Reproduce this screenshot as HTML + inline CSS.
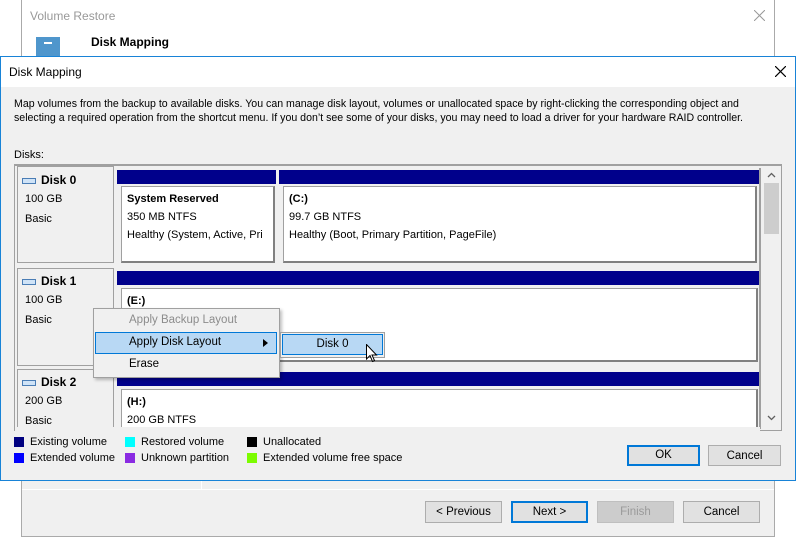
<!DOCTYPE html><html><head><style>
*{margin:0;padding:0;box-sizing:border-box}
body{width:796px;height:537px;overflow:hidden;background:#fff;font-family:"Liberation Sans",sans-serif;font-size:11px;color:#000;position:relative}
.a{position:absolute;white-space:nowrap}
.btn{position:absolute;background:#e1e1e1;border:1px solid #adadad;text-align:center;line-height:20px;font-size:11.5px}
.bar{position:absolute;background:#00008b;height:14px}
.vol{position:absolute;background:#fff;border:1px solid #a0a0a0;border-right:2px solid #808080;border-bottom:2px solid #808080;padding:3px 5px;line-height:18px;white-space:nowrap;overflow:hidden}
.pane{position:absolute;left:17px;width:97px;background:#f0f0f0;border:1px solid #a0a0a0}
.di{display:inline-block;width:14px;height:6px;border:1px solid #4a7db5;background:#cfe3f7;vertical-align:middle;margin-right:5px}
.sq{position:absolute;width:10px;height:10px}
</style></head><body>
<div class="a" style="left:21px;top:0;width:754px;height:537px;border:1px solid #aaa;border-top:none;background:#fff"></div>
<div class="a" style="left:30px;top:9px;color:#999;font-size:12px">Volume Restore</div>
<svg class="a" style="left:754px;top:10px" width="11" height="11"><path d="M0 0L11 11M11 0L0 11" stroke="#999" stroke-width="1"/></svg>
<div class="a" style="left:36px;top:37px;width:24px;height:20px;background:#4f96cc"></div>
<div class="a" style="left:44px;top:42px;width:8px;height:2px;background:#fff"></div>
<div class="a" style="left:91px;top:35px;font-weight:bold;font-size:12px">Disk Mapping</div>
<div class="a" style="left:22px;top:480px;width:752px;height:56px;background:#f0f0f0;border-top:1px solid #ddd"></div>
<div class="a" style="left:22px;top:489px;width:752px;height:1px;background:#fff"></div>
<div class="a" style="left:201px;top:480px;width:1px;height:9px;background:#fff"></div>
<div class="btn" style="left:425px;top:501px;width:77px;height:22px">&lt; Previous</div>
<div class="btn" style="left:511px;top:501px;width:77px;height:22px;border:2px solid #0078d7;line-height:18px">Next &gt;</div>
<div class="btn" style="left:597px;top:501px;width:77px;height:22px;background:#ccc;border-color:#bfbfbf;color:#9a9a9a">Finish</div>
<div class="btn" style="left:683px;top:501px;width:77px;height:22px">Cancel</div>

<div class="a" style="left:0;top:56px;width:796px;height:425px;border:1px solid #1883d7;background:#f0f0f0"></div>
<div class="a" style="left:1px;top:57px;width:794px;height:30px;background:#fff"></div>
<div class="a" style="left:9px;top:65px;font-size:12px">Disk Mapping</div>
<svg class="a" style="left:775px;top:66px" width="11" height="11"><path d="M0 0L11 11M11 0L0 11" stroke="#000" stroke-width="1.2"/></svg>
<div class="a" style="left:14px;top:97px;line-height:14px;font-size:10.6px">Map volumes from the backup to available disks. You can manage disk layout, volumes or unallocated space by right-clicking the corresponding object and<br>selecting a required operation from the shortcut menu. If you don’t see some of your disks, you may need to load a driver for your hardware RAID controller.</div>
<div class="a" style="left:14px;top:149px">Disks:</div>
<div class="a" style="left:14px;top:164px;width:768px;height:267px;border:1px solid #a0a0a0;border-top:2px solid #a0a0a0;background:#f0f0f0;overflow:hidden"></div>
<div class="a" style="left:763px;top:168px;width:17px;height:261px;background:#f0f0f0"></div>
<div class="a" style="left:764px;top:183px;width:15px;height:51px;background:#cdcdcd"></div>
<svg class="a" style="left:767px;top:172px" width="9" height="6"><path d="M1 5L4.5 1.5L8 5" stroke="#606060" fill="none" stroke-width="1.3"/></svg>
<svg class="a" style="left:767px;top:415px" width="9" height="6"><path d="M1 1L4.5 4.5L8 1" stroke="#606060" fill="none" stroke-width="1.3"/></svg>
<div class="a" style="left:759px;top:168px;width:2px;height:261px;background:#a0a0a0"></div>

<div class="pane" style="top:166px;height:97px"></div>
<div class="a" style="left:22px;top:173px;font-weight:bold;font-size:12px"><span class="di"></span>Disk 0</div>
<div class="a" style="left:25px;top:193px">100 GB</div>
<div class="a" style="left:25px;top:213px">Basic</div>
<div class="bar" style="left:117px;top:170px;width:159px"></div>
<div class="bar" style="left:279px;top:170px;width:480px"></div>
<div class="vol" style="left:121px;top:186px;width:154px;height:77px"><b>System Reserved</b><br>350 MB NTFS<br>Healthy (System, Active, Pri</div>
<div class="vol" style="left:283px;top:186px;width:474px;height:77px"><b>(C:)</b><br>99.7 GB NTFS<br>Healthy (Boot, Primary Partition, PageFile)</div>

<div class="pane" style="top:268px;height:98px"></div>
<div class="a" style="left:22px;top:274px;font-weight:bold;font-size:12px"><span class="di"></span>Disk 1</div>
<div class="a" style="left:25px;top:294px">100 GB</div>
<div class="a" style="left:25px;top:314px">Basic</div>
<div class="bar" style="left:117px;top:271px;width:642px"></div>
<div class="vol" style="left:121px;top:288px;width:637px;height:74px"><b>(E:)</b></div>

<div class="pane" style="top:369px;height:62px"></div>
<div class="a" style="left:22px;top:375px;font-weight:bold;font-size:12px"><span class="di"></span>Disk 2</div>
<div class="a" style="left:25px;top:395px">200 GB</div>
<div class="a" style="left:25px;top:415px">Basic</div>
<div class="bar" style="left:117px;top:372px;width:642px"></div>
<div class="vol" style="left:121px;top:389px;width:637px;height:42px;border-bottom:none"><b>(H:)</b><br>200 GB NTFS</div>
<div class="a" style="left:15px;top:427px;width:745px;height:4px;background:#f0f0f0"></div>

<div class="sq" style="left:14px;top:437px;background:#000080"></div><div class="a" style="left:30px;top:436px">Existing volume</div>
<div class="sq" style="left:14px;top:453px;background:#0000ff"></div><div class="a" style="left:30px;top:452px">Extended volume</div>
<div class="sq" style="left:125px;top:437px;background:#00ffff"></div><div class="a" style="left:141px;top:436px">Restored volume</div>
<div class="sq" style="left:125px;top:453px;background:#8a2be2"></div><div class="a" style="left:141px;top:452px">Unknown partition</div>
<div class="sq" style="left:247px;top:437px;background:#000"></div><div class="a" style="left:263px;top:436px">Unallocated</div>
<div class="sq" style="left:247px;top:453px;background:#7cfc00"></div><div class="a" style="left:263px;top:452px">Extended volume free space</div>
<div class="btn" style="left:627px;top:445px;width:73px;height:21px;border:2px solid #0078d7;line-height:17px">OK</div>
<div class="btn" style="left:708px;top:445px;width:73px;height:21px">Cancel</div>

<div class="a" style="left:93px;top:308px;width:187px;height:70px;background:#f0f0f0;border:1px solid #a0a0a0;box-shadow:2px 2px 3px rgba(0,0,0,.25)"></div>
<div class="a" style="left:95px;top:332px;width:182px;height:22px;background:#b8d8f4;border:1px solid #0078d7"></div>
<div class="a" style="left:129px;top:314px;color:#8c8c8c;font-size:11.5px">Apply Backup Layout</div>
<div class="a" style="left:129px;top:336px;font-size:11.5px">Apply Disk Layout</div>
<svg class="a" style="left:263px;top:339px" width="5" height="8"><path d="M0 0L5 4L0 8Z" fill="#000"/></svg>
<div class="a" style="left:129px;top:358px;font-size:11.5px">Erase</div>
<div class="a" style="left:280px;top:332px;width:105px;height:26px;background:#f0f0f0;border:1px solid #a0a0a0"></div>
<div class="a" style="left:282px;top:334px;width:101px;height:21px;background:#b8d8f4;border:1px solid #0078d7;text-align:center;line-height:19px;font-size:11.5px">Disk 0</div>
<svg class="a" style="left:366px;top:344px" width="12" height="20" viewBox="0 0 12 20"><path d="M0.5 0.5 L0.5 15 L4 11.5 L6.5 17.5 L8.5 16.5 L6 11 L10.5 11 Z" fill="#fff" stroke="#000"/></svg>
</body></html>
